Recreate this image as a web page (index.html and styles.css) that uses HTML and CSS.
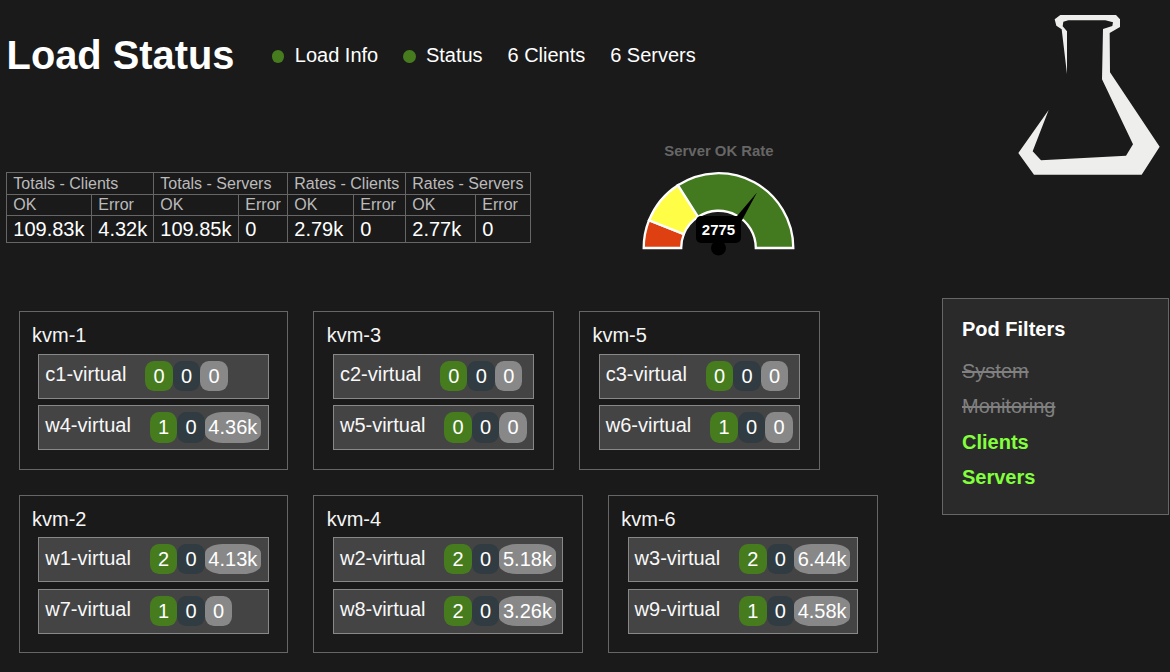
FILE: index.html
```html
<!DOCTYPE html>
<html lang="en">
<head>
<meta charset="utf-8">
<title>Load Status</title>
<link rel="stylesheet" href="styles.css">
</head>
<body>
<div class="page">
  <main class="main">
    <header class="header">
      <h1 class="title">Load Status</h1>
      <div class="item"><span class="dot"></span>Load Info</div>
      <div class="item"><span class="dot"></span>Status</div>
      <div class="item">6 Clients</div>
      <div class="item">6 Servers</div>
    </header>
    <section class="metrics">
      <table class="totals">
        <colgroup><col class="w85"><col class="w62"><col class="w85"><col class="w49"><col class="w66"><col class="w52"><col class="w70"><col class="w55"></colgroup>
        <tr class="group"><th colspan="2">Totals - Clients</th><th colspan="2">Totals - Servers</th><th colspan="2">Rates - Clients</th><th colspan="2">Rates - Servers</th></tr>
        <tr class="sub"><th>OK</th><th>Error</th><th>OK</th><th>Error</th><th>OK</th><th>Error</th><th>OK</th><th>Error</th></tr>
        <tr class="values"><td>109.83k</td><td>4.32k</td><td>109.85k</td><td>0</td><td>2.79k</td><td>0</td><td>2.77k</td><td>0</td></tr>
      </table>
      <svg class="gauge" width="180" height="130" viewBox="0 0 180 130">
        <text class="gauge-title" x="89" y="21" text-anchor="middle">Server OK Rate</text>
        <g stroke="#fff" stroke-width="2.3">
          <path fill="#df4012" d="M13.7 113A74.8 74.8 0 0 1 19 85.3L53.8 99.1A37.3 37.3 0 0 0 51.2 113Z"/>
          <path fill="#fffd45" d="M19 85.3A74.8 74.8 0 0 1 47.9 50.2L68.1 81.8A37.3 37.3 0 0 0 53.8 99.1Z"/>
          <path fill="#447a1f" d="M47.9 50.2A74.8 74.8 0 0 1 163.3 113H125.8A37.3 37.3 0 0 0 68.1 81.8Z"/>
        </g>
        <path d="M126.8 57.8L102.5 97.5L93 97.5Z"/>
        <path d="M126.8 57.8L112.4 84.5L108 90L104 90Z"/>
        <circle cx="88.5" cy="113" r="7.5"/>
        <rect x="66" y="81" width="45" height="27" rx="5"/>
        <text class="gauge-value" x="88.5" y="100" text-anchor="middle">2775</text>
      </svg>
    </section>
    <section class="hosts">
      <div class="row">
        <article class="host wide"><h2>kvm-1</h2>
          <div class="pod"><span class="name">c1-virtual</span><b class="ok">0</b><b class="err">0</b><b class="rate">0</b></div>
          <div class="pod"><span class="name">w4-virtual</span><b class="ok">1</b><b class="err">0</b><b class="rate">4.36k</b></div>
        </article>
        <article class="host"><h2>kvm-3</h2>
          <div class="pod"><span class="name">c2-virtual</span><b class="ok">0</b><b class="err">0</b><b class="rate">0</b></div>
          <div class="pod"><span class="name">w5-virtual</span><b class="ok">0</b><b class="err">0</b><b class="rate">0</b></div>
        </article>
        <article class="host"><h2>kvm-5</h2>
          <div class="pod"><span class="name">c3-virtual</span><b class="ok">0</b><b class="err">0</b><b class="rate">0</b></div>
          <div class="pod"><span class="name">w6-virtual</span><b class="ok">1</b><b class="err">0</b><b class="rate">0</b></div>
        </article>
      </div>
      <div class="row">
        <article class="host wide"><h2>kvm-2</h2>
          <div class="pod"><span class="name">w1-virtual</span><b class="ok">2</b><b class="err">0</b><b class="rate">4.13k</b></div>
          <div class="pod"><span class="name">w7-virtual</span><b class="ok">1</b><b class="err">0</b><b class="rate">0</b></div>
        </article>
        <article class="host wide"><h2>kvm-4</h2>
          <div class="pod"><span class="name">w2-virtual</span><b class="ok">2</b><b class="err">0</b><b class="rate">5.18k</b></div>
          <div class="pod"><span class="name">w8-virtual</span><b class="ok">2</b><b class="err">0</b><b class="rate">3.26k</b></div>
        </article>
        <article class="host wide"><h2>kvm-6</h2>
          <div class="pod"><span class="name">w3-virtual</span><b class="ok">2</b><b class="err">0</b><b class="rate">6.44k</b></div>
          <div class="pod"><span class="name">w9-virtual</span><b class="ok">1</b><b class="err">0</b><b class="rate">4.58k</b></div>
        </article>
      </div>
    </section>
  </main>
  <aside class="side">
    <svg class="flask" width="170" height="190" viewBox="0 0 510 570" fill="#eeeeec">
      <path d="M181 45H348L360 58V81L329 99L330 217L479 440L425 524H102L55 459L146 330L98 454L123 481L378 467L399 433L306 238L309 87L337 78L339 67L316 61H205L190 65L188 79L201 94V222L185 88L169 77L164 58Z"/>
    </svg>
    <nav class="filters">
      <h3>Pod Filters</h3>
      <a class="off">System</a>
      <a class="off">Monitoring</a>
      <a class="on">Clients</a>
      <a class="on">Servers</a>
    </nav>
  </aside>
</div>
</body>
</html>
```
FILE: styles.css
```css
* { box-sizing: border-box; }
body {
  margin: 0;
  background: #1a1a1a;
  color: #fff;
  font: 20px/23px "Liberation Sans", Arial, sans-serif;
}
.page { display: flex; width: 1170px; height: 672px; overflow: hidden; }
.main { width: 942px; }
.header {
  display: flex;
  align-items: center;
  height: 135px;
  padding: 32px 0 57px 6.6px;
}
.title { margin: 0 36.4px 0 0; width: 229px; font-size: 39.8px; line-height: 46px; white-space: nowrap; }
.item { display: flex; align-items: center; margin-right: 24.9px; white-space: nowrap; }
.dot { width: 12.5px; height: 13px; margin: 3px 10.3px 0 0; border-radius: 50%; background: #467c1e; }

.metrics { display: flex; height: 176px; }
.totals {
  margin: 37px 99px 0 6px;
  width: 525px;
  height: 71px;
  table-layout: fixed;
  border-collapse: collapse;
}
.totals th, .totals td { padding: 0 0 0 6.3px; border: 1px solid #666; text-align: left; font-weight: normal; white-space: nowrap; }
.totals th { color: #bbb; font-size: 16px; line-height: 20px; }
.group { height: 22px; }
.sub { height: 21px; }
.values { height: 27px; }
.totals td { line-height: 26px; }
.w85 { width: 85px; }
.w62 { width: 62px; }
.w49 { width: 49px; }
.w66 { width: 66px; }
.w52 { width: 52px; }
.w70 { width: 70px; }
.w55 { width: 55px; }
.gauge-title { fill: #666; font-size: 14.9px; font-weight: bold; }
.gauge-value { fill: #fff; font-size: 15px; font-weight: bold; }

.hosts { display: grid; row-gap: 25px; padding-left: 18.8px; }
.row { display: flex; gap: 25px; }
.host { flex: none; width: 240.8px; height: 159px; padding: 12px 18.8px 0 18.5px; border: 1px solid #666; }
.wide { width: 269.65px; }
.row:last-child .host { height: 158px; }
.host h2 { margin: 0 0 7px -6.3px; font-size: 20px; font-weight: normal; line-height: 23px; color: #f5f5f5; }
.row:last-child h2 { margin-bottom: 6px; }
.pod {
  display: flex;
  height: 45px;
  margin-bottom: 6px;
  padding: 6px 0 0 6px;
  background: #444;
  border: 1px solid #888;
}
.row:last-child .pod { margin-bottom: 7px; }
.name { margin: 2px 18.9px 0 0; color: #f8f8f8; }
.row:last-child .pod:nth-child(2) .name { margin-top: 3px; }
.pod b {
  min-width: 27.5px;
  height: 30px;
  padding: 0 3.6px;
  border-radius: 32%;
  font-weight: normal;
  line-height: 30px;
  text-align: center;
}
.row:first-child .pod:last-child b { height: 31px; }
.ok { background: #467c1e; }
.err { background: #303c41; }
.rate { background: #888; }

.side { display: flex; flex-direction: column; width: 227px; }
.flask { margin: 0 0 108px 58px; flex: none; }
.filters {
  display: flex;
  flex-direction: column;
  gap: 12.4px;
  height: 217px;
  padding: 19px;
  background: #2a2a2a;
  border: 1px solid #666;
}
.filters h3 { margin: 0 0 6.6px; font-size: 20px; line-height: 23px; }
.off { color: #808080; text-decoration: line-through; }
.off + .off { margin: -0.6px 0 0.6px; }
.on { color: #83ff3d; font-weight: bold; }
```
